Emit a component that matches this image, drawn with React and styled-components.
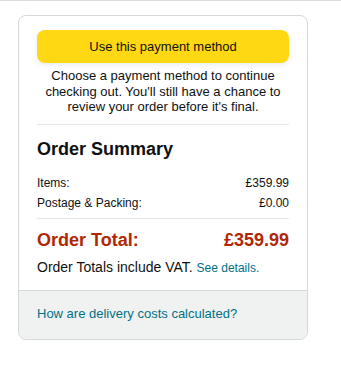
import React from "react";
import styled, { createGlobalStyle } from "styled-components";

const Global = createGlobalStyle`
  html, body { margin: 0; padding: 0; background: #fff; }
  body {
    font-family: "Liberation Sans", Arial, sans-serif;
    color: #0F1111;
    -webkit-font-smoothing: antialiased;
  }
`;

const Page = styled.div`
  border-top: 1px solid #DDDDDD;
  padding: 14px 0 20px 18px;
`;

const Card = styled.div`
  box-sizing: border-box;
  width: 290px;
  border: 1px solid #D5D9D9;
  border-radius: 8px;
  overflow: hidden;
  background: #fff;
`;

const Body = styled.div`
  padding: 14px 18px 12px 18px;
  display: flex;
  flex-direction: column;
`;

const PrimaryButton = styled.button`
  box-sizing: border-box;
  height: 33px;
  width: 100%;
  border: none;
  border-radius: 8px;
  background: #FFD814;
  box-shadow: 0 2px 5px 0 rgba(213, 217, 217, 0.5);
  font-family: inherit;
  font-size: 13px;
  color: #0F1111;
  cursor: pointer;
  padding: 0;
`;

const Note = styled.p`
  margin: 5px 0 0 0;
  font-size: 13px;
  line-height: 15.5px;
  text-align: center;
`;

const Divider = styled.hr`
  border: none;
  border-top: 1px solid #E7E7E7;
  margin: ${(p) => p.$top}px 0 0 0;
  height: 0;
`;

const Heading = styled.h3`
  margin: 12px 0 0 0;
  font-size: 18px;
  line-height: 24px;
  font-weight: 700;
`;

const Rows = styled.div`
  margin-top: 12px;
  display: flex;
  flex-direction: column;
`;

const Row = styled.div`
  display: flex;
  justify-content: space-between;
  font-size: 12px;
  line-height: 20px;
`;

const TotalRow = styled.div`
  margin-top: 9px;
  display: flex;
  justify-content: space-between;
  font-size: 18px;
  line-height: 24px;
  font-weight: 700;
  color: #B12704;
`;

const VatLine = styled.div`
  margin-top: 5px;
  font-size: 14px;
  line-height: 20px;
`;

const Link = styled.a`
  color: #007185;
  text-decoration: none;
  font-size: ${(p) => p.$size}px;
`;

const Footer = styled.div`
  background: #F0F2F2;
  border-top: 1px solid #D5D9D9;
  padding: 13px 18px 16px 18px;
  line-height: 18px;
`;

export default function App() {
  return (
    <>
      <Global />
      <Page>
        <Card>
          <Body>
            <PrimaryButton>Use this payment method</PrimaryButton>
            <Note>
              Choose a payment method to continue checking out. You'll still
              have a chance to review your order before it's final.
            </Note>
            <Divider $top={9} />
            <Heading>Order Summary</Heading>
            <Rows>
              <Row>
                <span>Items:</span>
                <span>£359.99</span>
              </Row>
              <Row>
                <span>Postage &amp; Packing:</span>
                <span>£0.00</span>
              </Row>
            </Rows>
            <Divider $top={5} />
            <TotalRow>
              <span>Order Total:</span>
              <span>£359.99</span>
            </TotalRow>
            <VatLine>
              Order Totals include VAT. <Link href="#" $size={12}>See details.</Link>
            </VatLine>
          </Body>
          <Footer>
            <Link href="#" $size={13}>How are delivery costs calculated?</Link>
          </Footer>
        </Card>
      </Page>
    </>
  );
}
